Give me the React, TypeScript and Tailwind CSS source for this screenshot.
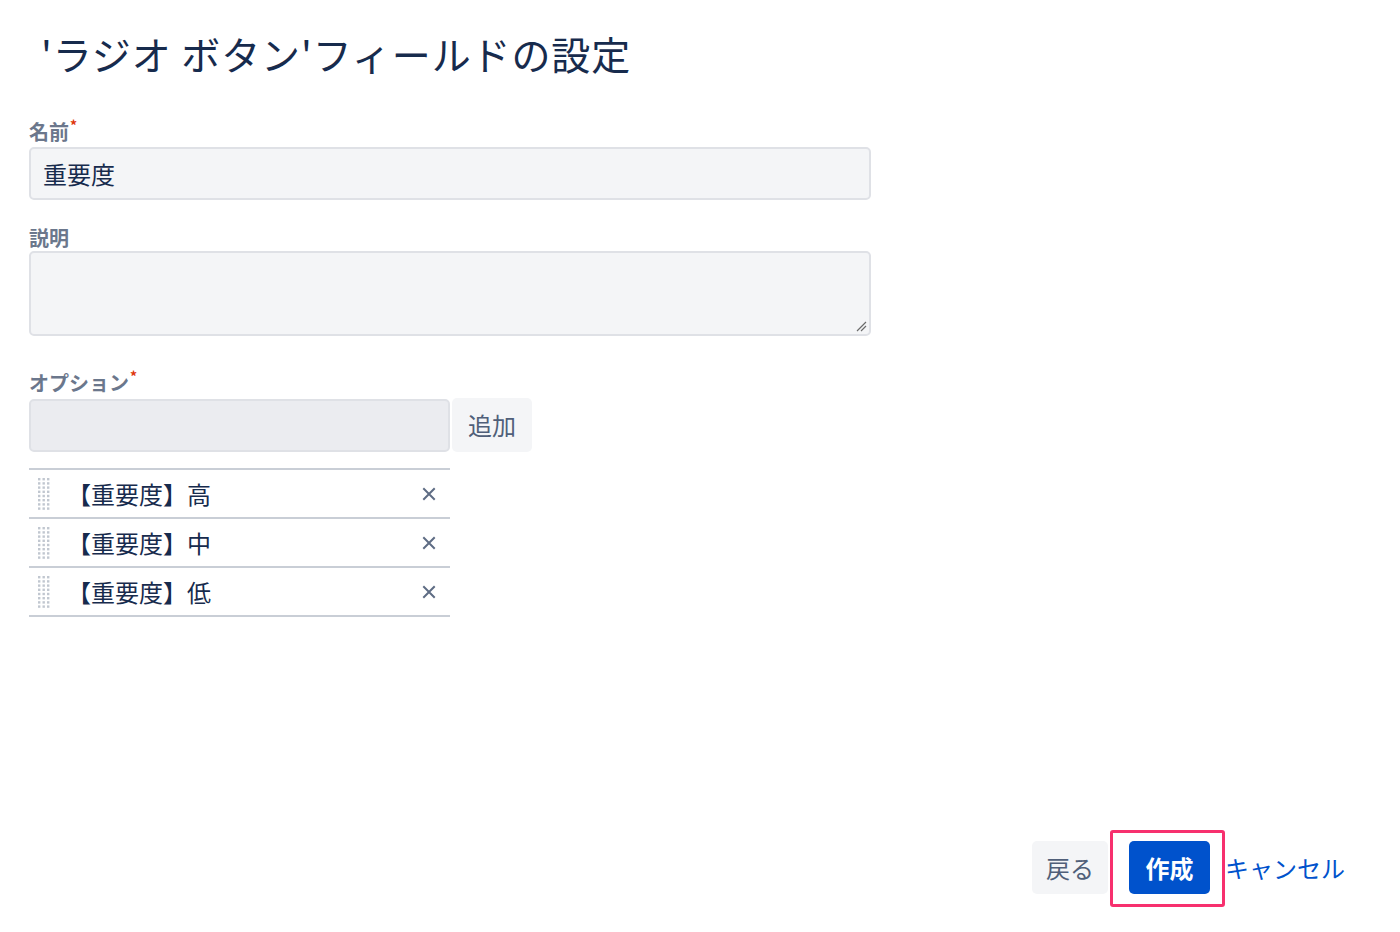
import React from 'react'

const font = { fontFamily: '"Noto Sans CJK JP", "Noto Sans", sans-serif' }

const options = ['【重要度】高', '【重要度】中', '【重要度】低']

const DragHandle = () => (
  <svg width="14" height="34" viewBox="0 0 14 34" className="shrink-0">
    {Array.from({ length: 8 }).map((_, r) =>
      [0, 1, 2].map((c) => (
        <rect key={`${r}-${c}`} x={1 + c * 4.5} y={1 + r * 4.2} width="2.4" height="2.4" fill="#c1c7d0" />
      ))
    )}
  </svg>
)

const CloseIcon = () => (
  <svg width="14" height="14" viewBox="0 0 14 14">
    <path d="M2 2 L12 12 M12 2 L2 12" stroke="#5e6c84" strokeWidth="2" strokeLinecap="square" />
  </svg>
)

const Label = ({ text, required }: { text: string; required?: boolean }) => (
  <div className="flex items-start text-[20px] font-bold text-[#6b778c] leading-[24px]">
    {text}
    {required && <span className="text-[#de350b] text-[14px] leading-[14px] ml-[1px] -mt-[2px]">*</span>}
  </div>
)

export default function App() {
  return (
    <div className="h-[932px] w-[1400px] bg-white flex flex-col text-[#172b4d]" style={font}>
      {/* Title */}
      <h1 className="pl-[41px] pt-[27px] text-[39px] leading-[52px] font-normal tracking-[0.9px]">
        'ラジオ ボタン'フィールドの設定
      </h1>

      {/* Form */}
      <div className="pl-[29px] pt-[41px] w-[900px]">
        <Label text="名前" required />
        <div className="mt-[3px] w-[842px] h-[53px] bg-[#f4f5f7] border-2 border-[#dfe1e6] rounded-[5px] flex items-center px-[12px] text-[24px]">
          重要度
        </div>

        <div className="mt-[26px]">
          <Label text="説明" />
        </div>
        <div className="mt-[1px] w-[842px] h-[85px] bg-[#f4f5f7] border-2 border-[#dfe1e6] rounded-[5px] relative">
          <svg width="12" height="12" viewBox="0 0 12 12" className="absolute right-[2px] bottom-[2px]">
            <path d="M11 2 L2 11 M11 6 L6 11" stroke="#6b6b6b" strokeWidth="1.2" />
          </svg>
        </div>

        <div className="mt-[35px]">
          <Label text="オプション" required />
        </div>
        <div className="mt-[4px] flex items-stretch">
          <div className="w-[421px] h-[53px] bg-[#ebecf0] border-2 border-[#dfe1e6] rounded-[5px]" />
          <button className="ml-[2px] w-[80px] h-[54px] -mt-[1px] bg-[#f4f5f7] rounded-[5px] text-[24px] text-[#505f79]">
            追加
          </button>
        </div>

        <div className="mt-[16px] w-[421px] border-t-2 border-[#c9ced6]">
          {options.map((o) => (
            <div key={o} className="h-[49px] border-b-2 border-[#c9ced6] flex items-center pl-[8px] pr-[14px]">
              <DragHandle />
              <span className="ml-[16px] text-[24px] flex-1">{o}</span>
              <CloseIcon />
            </div>
          ))}
        </div>
      </div>

      {/* Footer */}
      <div className="mt-auto mb-[38px] flex items-center justify-end pr-[55px]">
        <button className="h-[53px] px-[14px] bg-[#f4f5f7] rounded-[5px] text-[24px] text-[#505f79]">
          戻る
        </button>
        <div className="relative ml-[21px]">
          <button className="h-[53px] w-[81px] bg-[#0052cc] rounded-[5px] text-[24px] font-bold text-white">
            作成
          </button>
          <div className="absolute -left-[19px] -right-[15px] -top-[11px] -bottom-[13px] border-[3px] border-[#f7306e] rounded-[3px] pointer-events-none" />
        </div>
        <a className="ml-[15px] text-[24px] text-[#0052cc]">キャンセル</a>
      </div>
    </div>
  )
}
